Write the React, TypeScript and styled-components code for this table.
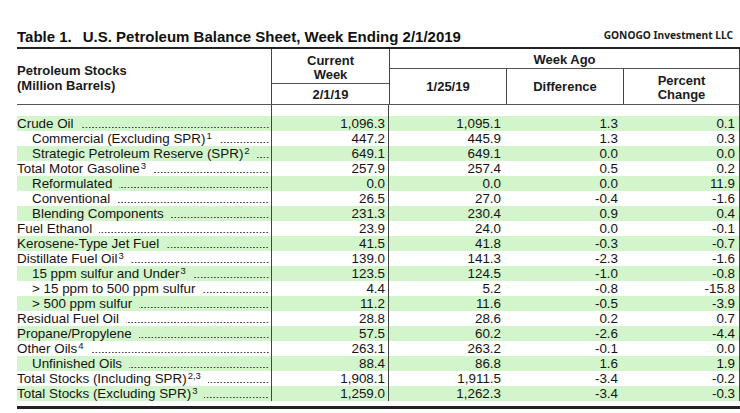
import React from "react";
import styled, { createGlobalStyle } from "styled-components";

const Global = createGlobalStyle`
  html, body { margin: 0; padding: 0; background: #fff; }
  body { font-family: "Liberation Sans", Arial, sans-serif; color: #151515; }
`;

const Page = styled.div`
  width: 740px;
  height: 413px;
  overflow: hidden;
  padding: 28px 0 0 17px;
  box-sizing: border-box;
`;

const TitleBar = styled.div`
  display: flex;
  justify-content: space-between;
  align-items: flex-start;
  width: 723px;
  margin-bottom: 1px;
`;

const Title = styled.h1`
  margin: 0;
  font-size: 15px;
  line-height: 18px;
  font-weight: 700;
  color: #111;
`;

const TitleGap = styled.span`
  display: inline-block;
  width: 11px;
`;

const Brand = styled.div`
  font-family: "Noto Sans", "Open Sans", sans-serif;
  font-weight: 700;
  font-size: 10.2px;
  line-height: 12px;
  color: #222;
  margin-top: 1px;
  padding-right: 7px;
`;

const Table = styled.div`
  width: 723px;
  border-top: 2px solid #222;
`;

const Head = styled.div`
  display: grid;
  grid-template-columns: 254px 118px 351px;
  height: 56px;
  border-bottom: 1px solid #555;
  box-sizing: border-box;
`;

const HeadLabel = styled.div`
  font-weight: 700;
  font-size: 13px;
  line-height: 15px;
  padding-top: 14px;
  color: #1a1a1a;
`;

const HeadCol = styled.div<{ $right?: boolean }>`
  display: flex;
  flex-direction: column;
  border-left: 1px solid #444;
  ${(p) => (p.$right ? "border-right: 1px solid #444;" : "")}
`;

const HeadCell = styled.div<{ $h?: number; $line?: boolean; $pt?: number }>`
  ${(p) => (p.$h ? `height: ${p.$h}px;` : "flex: 1;")}
  display: flex;
  align-items: center;
  justify-content: center;
  text-align: center;
  font-weight: 700;
  font-size: 13px;
  line-height: 14px;
  color: #1a1a1a;
  box-sizing: border-box;
  padding-top: ${(p) => p.$pt ?? 0}px;
  ${(p) => (p.$line ? "border-bottom: 1px solid #555;" : "")}
`;

const SubHeads = styled.div`
  flex: 1;
  display: grid;
  grid-template-columns: 116px 117px 116px;
`;

const SubHead = styled(HeadCell)<{ $sep?: boolean }>`
  ${(p) => (p.$sep ? "border-left: 1px solid #444;" : "")}
`;

const Row = styled.div<{ $green?: boolean; $h?: number }>`
  display: grid;
  grid-template-columns: 254px 118px 116px 117px 118px;
  height: ${(p) => p.$h ?? 15}px;
  background: ${(p) => (p.$green ? "#d2f5cb" : "#fff")};
  font-size: 13.4px;
  line-height: 15px;
  color: #141414;
`;

const Label = styled.div<{ $indent?: boolean }>`
  display: flex;
  align-items: flex-start;
  padding-left: ${(p) => (p.$indent ? 15 : 0)}px;
  padding-right: 2px;
  white-space: nowrap;
  min-width: 0;
`;

const Sup = styled.sup`
  font-size: 9.5px;
  line-height: 0;
  vertical-align: 4px;
  margin-left: 1px;
`;

const Leader = styled.span`
  flex: 1;
  min-width: 0;
  height: 3px;
  margin: 10px 0 0 7px;
  background-image: radial-gradient(circle at center, #444 0.65px, transparent 1.05px);
  background-size: 3.3px 3px;
  background-repeat: repeat-x;
  background-position: right center;
`;

const Num = styled.div<{ $box?: boolean; $edge?: boolean }>`
  text-align: right;
  padding-right: ${(p) => (p.$box ? 3 : 4)}px;
  ${(p) => (p.$box ? "border-left: 1px solid #444; border-right: 1px solid #444;" : "")}
  ${(p) => (p.$edge ? "border-right: 1px solid #444;" : "")}
`;

const BottomRule = styled.div`
  margin-top: 5px;
  width: 723px;
  border-top: 3px solid #222;
`;

type R = [string, boolean, string, string, string, string, string];

const rows: R[] = [
  ["Crude Oil", false, "", "1,096.3", "1,095.1", "1.3", "0.1"],
  ["Commercial (Excluding SPR)", true, "1", "447.2", "445.9", "1.3", "0.3"],
  ["Strategic Petroleum Reserve (SPR)", true, "2", "649.1", "649.1", "0.0", "0.0"],
  ["Total Motor Gasoline", false, "3", "257.9", "257.4", "0.5", "0.2"],
  ["Reformulated", true, "", "0.0", "0.0", "0.0", "11.9"],
  ["Conventional", true, "", "26.5", "27.0", "-0.4", "-1.6"],
  ["Blending Components", true, "", "231.3", "230.4", "0.9", "0.4"],
  ["Fuel Ethanol", false, "", "23.9", "24.0", "0.0", "-0.1"],
  ["Kerosene-Type Jet Fuel", false, "", "41.5", "41.8", "-0.3", "-0.7"],
  ["Distillate Fuel Oil", false, "3", "139.0", "141.3", "-2.3", "-1.6"],
  ["15 ppm sulfur and Under", true, "3", "123.5", "124.5", "-1.0", "-0.8"],
  ["> 15 ppm to 500 ppm sulfur", true, "", "4.4", "5.2", "-0.8", "-15.8"],
  ["> 500 ppm sulfur", true, "", "11.2", "11.6", "-0.5", "-3.9"],
  ["Residual Fuel Oil", false, "", "28.8", "28.6", "0.2", "0.7"],
  ["Propane/Propylene", false, "", "57.5", "60.2", "-2.6", "-4.4"],
  ["Other Oils", false, "4", "263.1", "263.2", "-0.1", "0.0"],
  ["Unfinished Oils", true, "", "88.4", "86.8", "1.6", "1.9"],
  ["Total Stocks (Including SPR)", false, "2,3", "1,908.1", "1,911.5", "-3.4", "-0.2"],
  ["Total Stocks (Excluding SPR)", false, "3", "1,259.0", "1,262.3", "-3.4", "-0.3"],
];

export default function App() {
  return (
    <>
      <Global />
      <Page>
        <TitleBar>
          <Title>
            Table 1.<TitleGap />U.S. Petroleum Balance Sheet, Week Ending 2/1/2019
          </Title>
          <Brand>GONOGO Investment LLC</Brand>
        </TitleBar>
        <Table>
          <Head>
            <HeadLabel>
              Petroleum Stocks
              <br />
              (Million Barrels)
            </HeadLabel>
            <HeadCol>
              <HeadCell $h={35} $pt={4} $line>
                Current
                <br />
                Week
              </HeadCell>
              <HeadCell $pt={1}>2/1/19</HeadCell>
            </HeadCol>
            <HeadCol $right>
              <HeadCell $h={20} $pt={2} $line>
                Week Ago
              </HeadCell>
              <SubHeads>
                <SubHead $pt={1}>1/25/19</SubHead>
                <SubHead $pt={1} $sep>Difference</SubHead>
                <SubHead $pt={2} $sep>
                  Percent
                  <br />
                  Change
                </SubHead>
              </SubHeads>
            </HeadCol>
          </Head>
          <Row $h={11}>
            <Label />
            <Num $box />
            <Num />
            <Num />
            <Num $edge />
          </Row>
          {rows.map(([label, indent, sup, cur, ago, diff, pct], i) => (
            <Row key={label} $green={i % 2 === 0}>
              <Label $indent={indent}>
                <span>
                  {label}
                  {sup && <Sup>{sup}</Sup>}
                </span>
                <Leader />
              </Label>
              <Num $box>{cur}</Num>
              <Num>{ago}</Num>
              <Num>{diff}</Num>
              <Num $edge>{pct}</Num>
            </Row>
          ))}
        </Table>
        <BottomRule />
      </Page>
    </>
  );
}
